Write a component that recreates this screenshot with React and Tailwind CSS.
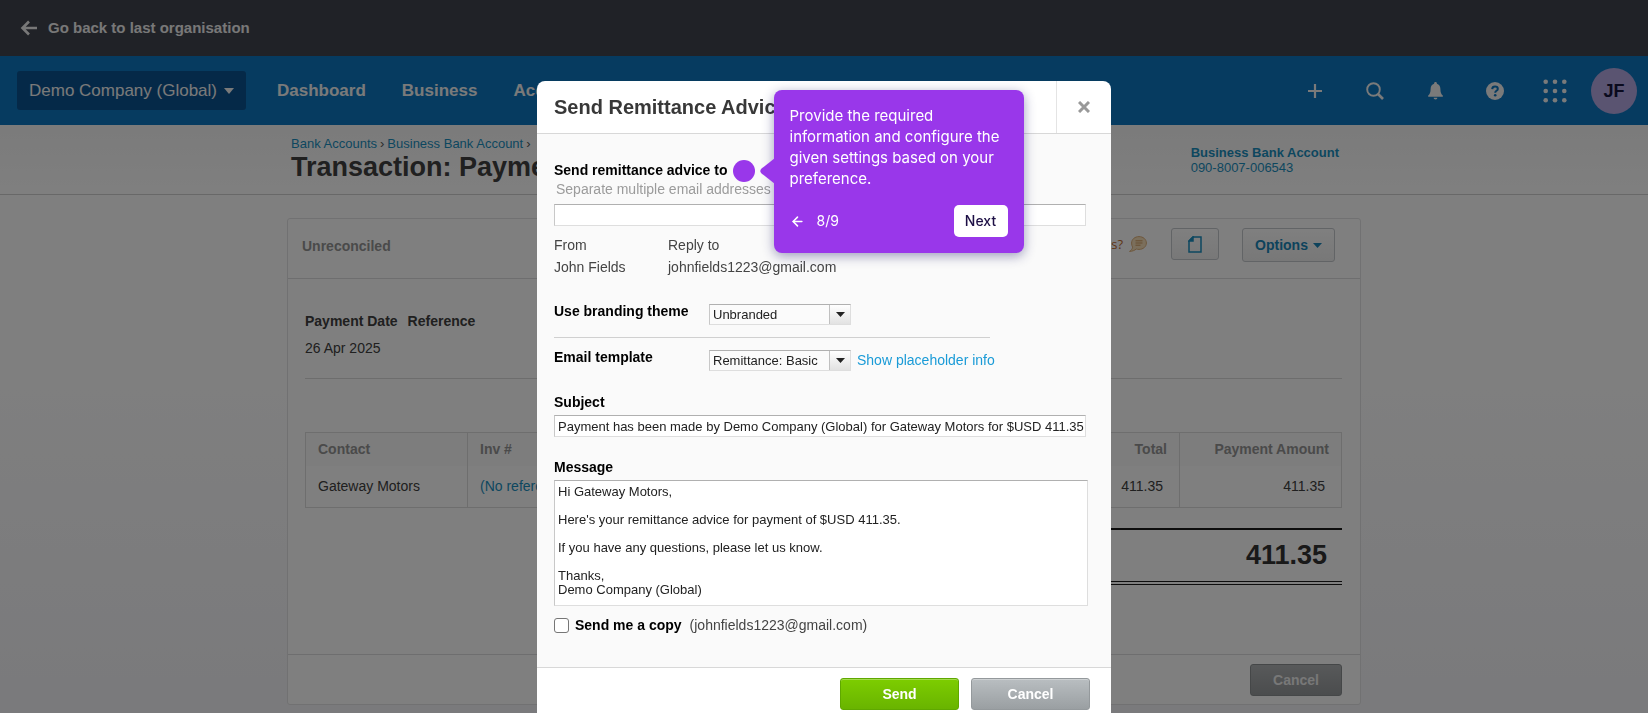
import { useState } from 'react';
import { ArrowLeft } from 'lucide-react';

const MESSAGE = `Hi Gateway Motors,

Here's your remittance advice for payment of $USD 411.35.

If you have any questions, please let us know.

Thanks,
Demo Company (Global)`;

const inputClass =
  'block border border-[#dedede] border-t-[#b0b0b0] border-l-[#c8c8c8] bg-white pl-[3px] text-[13px] text-[#222] outline-none';

function BackIcon() {
  return (
    <svg viewBox="0 0 18 16" className="h-4 w-[18px]" fill="none" stroke="currentColor" strokeWidth="2.600">
      <path d="M9 1.500L2.500 8 9 14.500M2.500 8H17" />
    </svg>
  );
}

function PlusIcon() {
  return (
    <svg viewBox="0 0 14 14" className="size-[14px]" stroke="currentColor" strokeWidth="2.200">
      <path d="M7 0v14M0 7h14" />
    </svg>
  );
}

function SearchIcon() {
  return (
    <svg viewBox="0 0 18 18" className="size-[18px]" fill="none" stroke="currentColor">
      <circle cx="7.500" cy="7.500" r="6.300" strokeWidth="1.900" />
      <path d="M12 12l5 5" strokeWidth="2.600" />
    </svg>
  );
}

function BellIcon() {
  return (
    <svg viewBox="0 0 16 19" className="h-[18px] w-[15px]" fill="currentColor">
      <path d="M8 0c.9 0 1.500.6 1.500 1.400v.4c2.300.6 3.700 2.700 3.700 5.400 0 4 .9 6 2.600 7.200v1.200H.2v-1.200c1.700-1.200 2.600-3.200 2.600-7.200 0-2.700 1.400-4.800 3.700-5.400v-.4C6.500.6 7.100 0 8 0z" />
      <path d="M6 16.800h4a2 1.800 0 0 1-4 0z" />
    </svg>
  );
}

function HelpIcon() {
  return (
    <svg viewBox="0 0 18 18" className="size-[18px]">
      <circle cx="9" cy="9" r="9" fill="currentColor" />
      <path d="M6.200 7.100C6.300 5.500 7.400 4.600 9 4.600s2.800.9 2.800 2.300c0 1.900-2.600 1.900-2.600 3.800" fill="none" stroke="#0d77c1" strokeWidth="2" />
      <circle cx="9.200" cy="13.200" r="1.300" fill="#0d77c1" />
    </svg>
  );
}

function AppsIcon() {
  return (
    <svg viewBox="0 0 24 24" className="size-6" fill="currentColor">
      {[2.7, 12, 21.3].map((y) => [2.7, 12, 21.3].map((x) => <circle key={`${x}-${y}`} cx={x} cy={y} r="2.300" />))}
    </svg>
  );
}

function FileIcon() {
  return (
    <svg viewBox="0 0 14 17" className="h-[17px] w-[14px]" fill="none" stroke="#1a8fc0" strokeWidth="1.500">
      <path d="M5 1H13v15H1V5z" />
      <path d="M5 1v4H1z" fill="#1a8fc0" />
    </svg>
  );
}

function SpeechIcon() {
  return (
    <svg viewBox="0 0 18 16" className="h-4 w-[18px]">
      <path
        d="M10 .6c4.200 0 7.400 2.800 7.400 6.400s-3.200 6.400-7.400 6.400c-1 0-1.900-.1-2.700-.4-1.700 1.500-4 2.300-6.800 2.400 1.800-1.200 2.900-2.600 3.100-4.200C2.900 10 2.600 8.600 2.600 7 2.600 3.400 5.800.6 10 .6z"
        fill="#f6dfb8"
        stroke="#dcae78"
      />
      <path d="M6.500 4.800h7M6.500 7h7M6.500 9.200h5" stroke="#cf9a60" />
    </svg>
  );
}

function Caret({ className }) {
  return (
    <svg viewBox="0 0 10 5" className={className} preserveAspectRatio="none" fill="currentColor">
      <path d="M0 0h10L5 5z" />
    </svg>
  );
}

function TopBar() {
  return (
    <header>
      <div className="flex h-14 items-center bg-[#40454f] px-5">
        <a href="#back" className="flex items-center gap-[10px] text-[15px] font-bold text-[#f0f0f0]">
          <BackIcon />
          Go back to last organisation
        </a>
      </div>
      <nav className="flex h-[69px] items-center bg-[#0d77c1] pr-[11px] pl-[17px] text-[#f4f4f4]">
        <button className="flex h-[39px] items-center gap-[7px] rounded-[3px] bg-[#0b5390] px-3 text-[17px]">
          Demo Company (Global)
          <Caret className="h-[6px] w-[10px]" />
        </button>
        <div className="ml-[31px] flex gap-9 text-[17px] font-bold">
          <a href="#dashboard">Dashboard</a>
          <a href="#business">Business</a>
          <a href="#accounting">Accounting</a>
        </div>
        <div className="ml-auto flex items-center">
          <button aria-label="Create new" className="flex w-[60px] justify-center">
            <PlusIcon />
          </button>
          <button aria-label="Search" className="flex w-[60px] justify-center">
            <SearchIcon />
          </button>
          <button aria-label="Notifications" className="flex w-[60px] justify-center">
            <BellIcon />
          </button>
          <button aria-label="Help" className="flex w-[60px] justify-center">
            <HelpIcon />
          </button>
          <button aria-label="Apps" className="flex w-[60px] justify-center">
            <AppsIcon />
          </button>
          <button className="ml-[6px] size-[46px] rounded-full bg-[#b4a9e2] text-lg font-bold text-[#14143c]">JF</button>
        </div>
      </nav>
    </header>
  );
}

function PageHeader() {
  return (
    <div className="h-[70px] border-b border-[#d0d0d0] bg-linear-to-b from-[#f6f6f6] to-white">
      <div className="mx-auto flex max-w-[1074px] justify-between pr-[22px] pl-1">
        <div className="pt-[10px]">
          <div className="flex gap-[3px] text-[13px] leading-[18px] text-[#555]">
            <a href="#accounts" className="text-[#1a8fbf]">Bank Accounts</a>
            <span>›</span>
            <a href="#account" className="text-[#1a8fbf]">Business Bank Account</a>
            <span>›</span>
          </div>
          <h1 className="text-[27px] leading-7 font-bold text-[#404040]">Transaction: Payment</h1>
        </div>
        <a href="#account" className="pt-5 text-[13px] leading-[15px] text-[#1a8fbf]">
          <strong className="block">Business Bank Account</strong>
          090-8007-006543
        </a>
      </div>
    </div>
  );
}

function PaymentCard() {
  return (
    <main className="mx-auto mt-[23px] max-w-[1074px] rounded-[3px] border border-[#e2e2e4] bg-white text-sm text-[#404040]">
      <div className="flex h-[60px] items-start border-b border-[#dcdcde] pt-[9px] pr-[25px] pl-[14px]">
        <span className="mt-2 font-bold text-[#959595]">Unreconciled</span>
        <a href="#help" className="mt-2 ml-auto flex items-center gap-[6px] font-['Open_Sans',sans-serif] text-[13px] leading-4 text-[#c06a2c]">
          What's this?
          <SpeechIcon />
        </a>
        <button aria-label="Files" className="ml-6 flex h-8 w-12 items-center justify-center rounded-[3px] border border-[#c4c8cc] bg-linear-to-b from-white to-[#f0f0f0]">
          <FileIcon />
        </button>
        <button className="ml-[23px] flex h-[34px] w-[93px] items-center justify-center gap-[5px] rounded-[3px] border border-[#c4c8cc] bg-linear-to-b from-white to-[#f0f0f0] font-bold text-[#1a86b8]">
          Options
          <Caret className="h-[5px] w-[9px]" />
        </button>
      </div>

      <div className="pt-8 pr-[18px] pl-[17px]">
        <dl className="flex gap-[10px] border-b border-[#dadada] pb-5">
          <div>
            <dt className="leading-5 font-bold">Payment Date</dt>
            <dd className="mt-[7px] leading-5">26 Apr 2025</dd>
          </div>
          <div>
            <dt className="leading-5 font-bold">Reference</dt>
          </div>
        </dl>

        <table className="mt-[53px] w-full table-fixed border-collapse border border-[#dcdcdc]">
          <thead>
            <tr className="h-[33px] bg-[#fafafa] text-[#959595]">
              <th className="w-[162px] border-r border-[#dcdcdc] px-3 text-left">Contact</th>
              <th className="px-3 text-left">Inv #</th>
              <th className="w-[120px] border-r border-[#dcdcdc] px-3 text-right">Total</th>
              <th className="w-[162px] px-3 text-right">Payment Amount</th>
            </tr>
          </thead>
          <tbody>
            <tr className="h-[42px]">
              <td className="border-r border-[#dcdcdc] px-3">Gateway Motors</td>
              <td className="px-3">
                <a href="#invoice" className="text-[#1a8fbf]">(No reference)</a>
              </td>
              <td className="border-r border-[#dcdcdc] px-4 text-right">411.35</td>
              <td className="px-4 text-right">411.35</td>
            </tr>
          </tbody>
        </table>

        <div className="mt-5 flex justify-end">
          <div className="w-[460px] border-t-2 border-b-4 border-t-[#1a1a1a] border-b-[#1a1a1a] pr-[15px] text-right text-[27px] leading-[51px] font-bold text-[#333] [border-bottom-style:double]">
            411.35
          </div>
        </div>
      </div>

      <div className="mt-[69px] flex justify-end border-t border-[#dcdcde] pt-[9px] pr-[18px] pb-2">
        <button className="h-8 w-[92px] rounded-[3px] border border-[#8a8e90] bg-linear-to-b from-[#b0b3b5] to-[#96999b] font-bold text-[#f0f0f0]">
          Cancel
        </button>
      </div>
    </main>
  );
}

function TourTip() {
  return (
    <div className="absolute top-[-70px] left-[41px] z-10 w-[250px] rounded-lg bg-[#9937ea] px-4 pt-[15px] pb-4 font-[Inter,sans-serif] text-white shadow-[0_3px_12px_rgba(40,40,110,0.45)]">
      <svg viewBox="0 0 14 26" className="absolute top-[68px] left-[-14px] h-[26px] w-[15px]" preserveAspectRatio="none" fill="#9937ea">
        <path d="M14 0v26L1.500 15.500Q-1 13 1.500 10.500z" />
      </svg>
      <p className="text-[15px] leading-[21px]">
        Provide the required information and configure the given settings based on your preference.
      </p>
      <div className="mt-4 flex items-center">
        <button aria-label="Previous">
          <ArrowLeft className="size-[15px]" strokeWidth={2.5} />
        </button>
        <span className="ml-3 text-sm">8/9</span>
        <button className="ml-auto h-8 w-[54px] rounded-[5px] bg-white text-sm font-medium text-[#1d0f45]">Next</button>
      </div>
    </div>
  );
}

function SelectBox({ id, value }) {
  return (
    <div className="relative h-[21px] w-[142px] text-[#222]">
      <select
        id={id}
        defaultValue={value}
        className="block h-full w-full appearance-none border border-[#dedede] border-t-[#b0b0b0] border-l-[#c8c8c8] bg-[#fbfbfb] pl-[3px] text-[13px] leading-[18px] outline-none"
      >
        <option>{value}</option>
      </select>
      <span className="pointer-events-none absolute inset-y-px right-px flex w-[21px] items-center justify-center border-l border-[#c0c0c0] bg-linear-to-b from-white to-[#e2e2e2]">
        <Caret className="h-[5px] w-[9px]" />
      </span>
    </div>
  );
}

function RemittanceModal() {
  const [to, setTo] = useState('');
  const [subject, setSubject] = useState(
    'Payment has been made by Demo Company (Global) for Gateway Motors for $USD 411.35'
  );
  const [message, setMessage] = useState(MESSAGE);
  const [copyMe, setCopyMe] = useState(false);

  return (
    <div role="dialog" aria-labelledby="modal-title" className="w-[574px] rounded-t-lg bg-white text-sm text-[#444]">
      <div className="flex h-[53px] items-stretch border-b border-[#d8d8d8] pl-[17px]">
        <h2 id="modal-title" className="self-center text-xl font-bold text-[#383838]">Send Remittance Advice</h2>
        <button aria-label="Close" className="ml-auto flex w-[55px] items-center justify-center border-l border-[#e4e4e4]">
          <svg viewBox="0 0 12 12" className="size-3" stroke="#999" strokeWidth="3">
            <path d="M1 1l10 10M11 1L1 11" />
          </svg>
        </button>
      </div>

      <form className="bg-[#fafafa] px-[17px] pt-[26px] pb-8">
        <div className="flex items-center">
          <label htmlFor="to" className="leading-5 font-bold text-black">Send remittance advice to</label>
          <span className="relative ml-[5px] h-5 w-[22px]">
            <span className="absolute top-0 left-0 size-[22px] rounded-full bg-[#9937ea]" />
            <TourTip />
          </span>
        </div>
        <p className="pl-[2px] leading-[18px] text-[#9b9b9b]">Separate multiple email addresses with a comma</p>
        <input id="to" value={to} onChange={(e) => setTo(e.target.value)} className={`${inputClass} mt-[6px] h-[22px] w-[532px]`} />

        <dl className="mt-2 flex leading-[22px]">
          <div className="w-[114px]">
            <dt>From</dt>
            <dd>John Fields</dd>
          </div>
          <div>
            <dt>Reply to</dt>
            <dd>johnfields1223@gmail.com</dd>
          </div>
        </dl>

        <div className="mt-[26px] flex w-[436px] items-start border-b border-[#d0d0d0] pb-3">
          <label htmlFor="theme" className="w-[155px] leading-[14px] font-bold text-black">Use branding theme</label>
          <SelectBox id="theme" value="Unbranded" />
        </div>
        <div className="mt-3 flex items-start">
          <label htmlFor="template" className="w-[155px] leading-[14px] font-bold text-black">Email template</label>
          <SelectBox id="template" value="Remittance: Basic" />
          <a href="#placeholders" className="ml-[6px] leading-5 text-[#1a9bd7]">Show placeholder info</a>
        </div>

        <label htmlFor="subject" className="mt-[21px] block leading-5 font-bold text-black">Subject</label>
        <input
          id="subject"
          value={subject}
          onChange={(e) => setSubject(e.target.value)}
          className={`${inputClass} mt-[3px] h-[22px] w-[532px]`}
        />

        <label htmlFor="message" className="mt-5 block leading-5 font-bold text-black">Message</label>
        <textarea
          id="message"
          value={message}
          onChange={(e) => setMessage(e.target.value)}
          className={`${inputClass} mt-[3px] h-[126px] w-[534px] resize-none pt-1 leading-[14px]`}
        />

        <div className="mt-[9px] flex items-center leading-5">
          <input
            id="copy"
            type="checkbox"
            checked={copyMe}
            onChange={(e) => setCopyMe(e.target.checked)}
            className="size-[15px] appearance-none rounded-[3px] border border-[#767676] bg-white checked:bg-[#1a9bd7]"
          />
          <label htmlFor="copy" className="ml-[6px] font-bold text-black">Send me a copy</label>
          <span className="ml-2">(johnfields1223@gmail.com)</span>
        </div>
      </form>

      <div className="flex justify-end gap-3 border-t border-[#d8d8d8] pt-[10px] pr-[21px] pb-5">
        <button className="h-8 w-[119px] rounded-[3px] border border-[#5fa800] bg-linear-to-b from-[#7dcd00] to-[#69b400] font-bold text-white inset-shadow-[0_1px_0_rgba(255,255,255,0.3)]">
          Send
        </button>
        <button className="h-8 w-[119px] rounded-[3px] border border-[#94999c] bg-linear-to-b from-[#b9bec1] to-[#9a9fa2] font-bold text-white inset-shadow-[0_1px_0_rgba(255,255,255,0.3)]">
          Cancel
        </button>
      </div>
    </div>
  );
}

export default function App() {
  return (
    <div className="min-h-screen bg-linear-to-b from-white from-50% to-[#f4f4f8] font-['Liberation_Sans',Arial,sans-serif]">
      <TopBar />
      <PageHeader />
      <PaymentCard />
      <div className="fixed inset-0 flex items-start justify-center overflow-hidden bg-black/50 pt-[81px]">
        <RemittanceModal />
      </div>
    </div>
  );
}
